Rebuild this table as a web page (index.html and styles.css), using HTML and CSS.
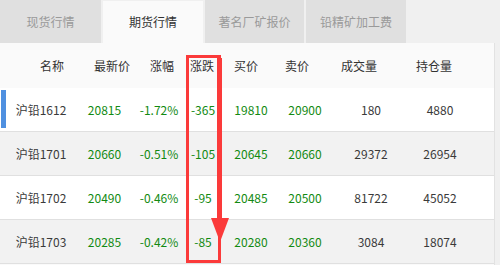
FILE: index.html
```html
<!DOCTYPE html>
<html lang="zh-CN">
<head>
<meta charset="utf-8">
<title>期货行情</title>
<link rel="stylesheet" href="styles.css">
</head>
<body>
<div class="widget">
  <div class="tabs">
    <div class="tab">现货行情</div>
    <div class="tab active">期货行情</div>
    <div class="tab">著名厂矿报价</div>
    <div class="tab">铅精矿加工费</div>
  </div>
  <div class="panel">
    <div class="head">
      <div class="cell">名称</div>
      <div class="cell">最新价</div>
      <div class="cell">涨幅</div>
      <div class="cell">涨跌</div>
      <div class="cell">买价</div>
      <div class="cell">卖价</div>
      <div class="cell">成交量</div>
      <div class="cell">持仓量</div>
    </div>
    <div class="row odd current">
      <div class="cell">沪铅1612</div>
      <div class="cell up">20815</div>
      <div class="cell up">-1.72%</div>
      <div class="cell up">-365</div>
      <div class="cell up">19810</div>
      <div class="cell up">20900</div>
      <div class="cell">180</div>
      <div class="cell">4880</div>
    </div>
    <div class="row even">
      <div class="cell">沪铅1701</div>
      <div class="cell up">20660</div>
      <div class="cell up">-0.51%</div>
      <div class="cell up">-105</div>
      <div class="cell up">20645</div>
      <div class="cell up">20660</div>
      <div class="cell">29372</div>
      <div class="cell">26954</div>
    </div>
    <div class="row odd">
      <div class="cell">沪铅1702</div>
      <div class="cell up">20490</div>
      <div class="cell up">-0.46%</div>
      <div class="cell up">-95</div>
      <div class="cell up">20485</div>
      <div class="cell up">20500</div>
      <div class="cell">81722</div>
      <div class="cell">45052</div>
    </div>
    <div class="row even">
      <div class="cell">沪铅1703</div>
      <div class="cell up">20285</div>
      <div class="cell up">-0.42%</div>
      <div class="cell up">-85</div>
      <div class="cell up">20280</div>
      <div class="cell up">20360</div>
      <div class="cell">3084</div>
      <div class="cell">18074</div>
    </div>
  </div>
  <svg class="mark" width="500" height="265" viewBox="0 0 500 265">
    <rect x="187.5" y="56.5" width="32" height="205" fill="none" stroke="#fb3a3a" stroke-width="3"/>
    <rect x="217" y="58" width="5" height="162" fill="#fb3a3a"/>
    <polygon points="211,218 229,218 220,242" fill="#fb3a3a"/>
  </svg>
</div>
</body>
</html>
```

FILE: styles.css
```css
html, body {
  margin: 0;
  padding: 0;
  background: #f0f0f0;
}
body {
  font-family: "Noto Sans CJK SC", "Noto Sans", sans-serif;
  font-size: 12px;
  color: #333;
}
.widget {
  position: relative;
  width: 500px;
  height: 265px;
  overflow: hidden;
}
.tabs {
  display: grid;
  grid-template-columns: 101px 100px 99px 100px;
  column-gap: 2px;
  height: 43px;
}
.tab {
  background: #e0e0e0;
  color: #9a9a9a;
  font-size: 12px;
  display: flex;
  align-items: center;
  justify-content: center;
  padding-bottom: 1px;
}
.tab.active {
  background: #fafafa;
  color: #333;
  margin-top: 1px;
}
.panel {
  width: 494px;
  height: 222px;
  background: #fafafa;
  border-right: 1px solid #e2e2e2;
}
.head {
  display: grid;
  grid-template-columns: 60px 60px 40px 40px 48px 54px 70px 80px;
  padding-left: 22px;
  height: 45px;
  align-items: center;
  color: #333;
}
.row {
  position: relative;
  display: grid;
  grid-template-columns: 82px 45px 64px 24px 72px 36px 96px 42px;
  height: 43px;
  align-items: center;
  border-bottom: 1px solid #e0e0e0;
  color: #3a3a3a;
}
.row.odd { background: #ffffff; }
.row.even { background: #f2f2f2; }
.row.current::before {
  content: "";
  position: absolute;
  left: 1px;
  top: 2px;
  bottom: 3px;
  width: 5px;
  background: #4f90e0;
}
.cell {
  display: flex;
  justify-content: center;
  white-space: nowrap;
  line-height: 16px;
}
.up { color: #128a12; }
.mark {
  position: absolute;
  left: 0;
  top: 0;
  pointer-events: none;
}
```
